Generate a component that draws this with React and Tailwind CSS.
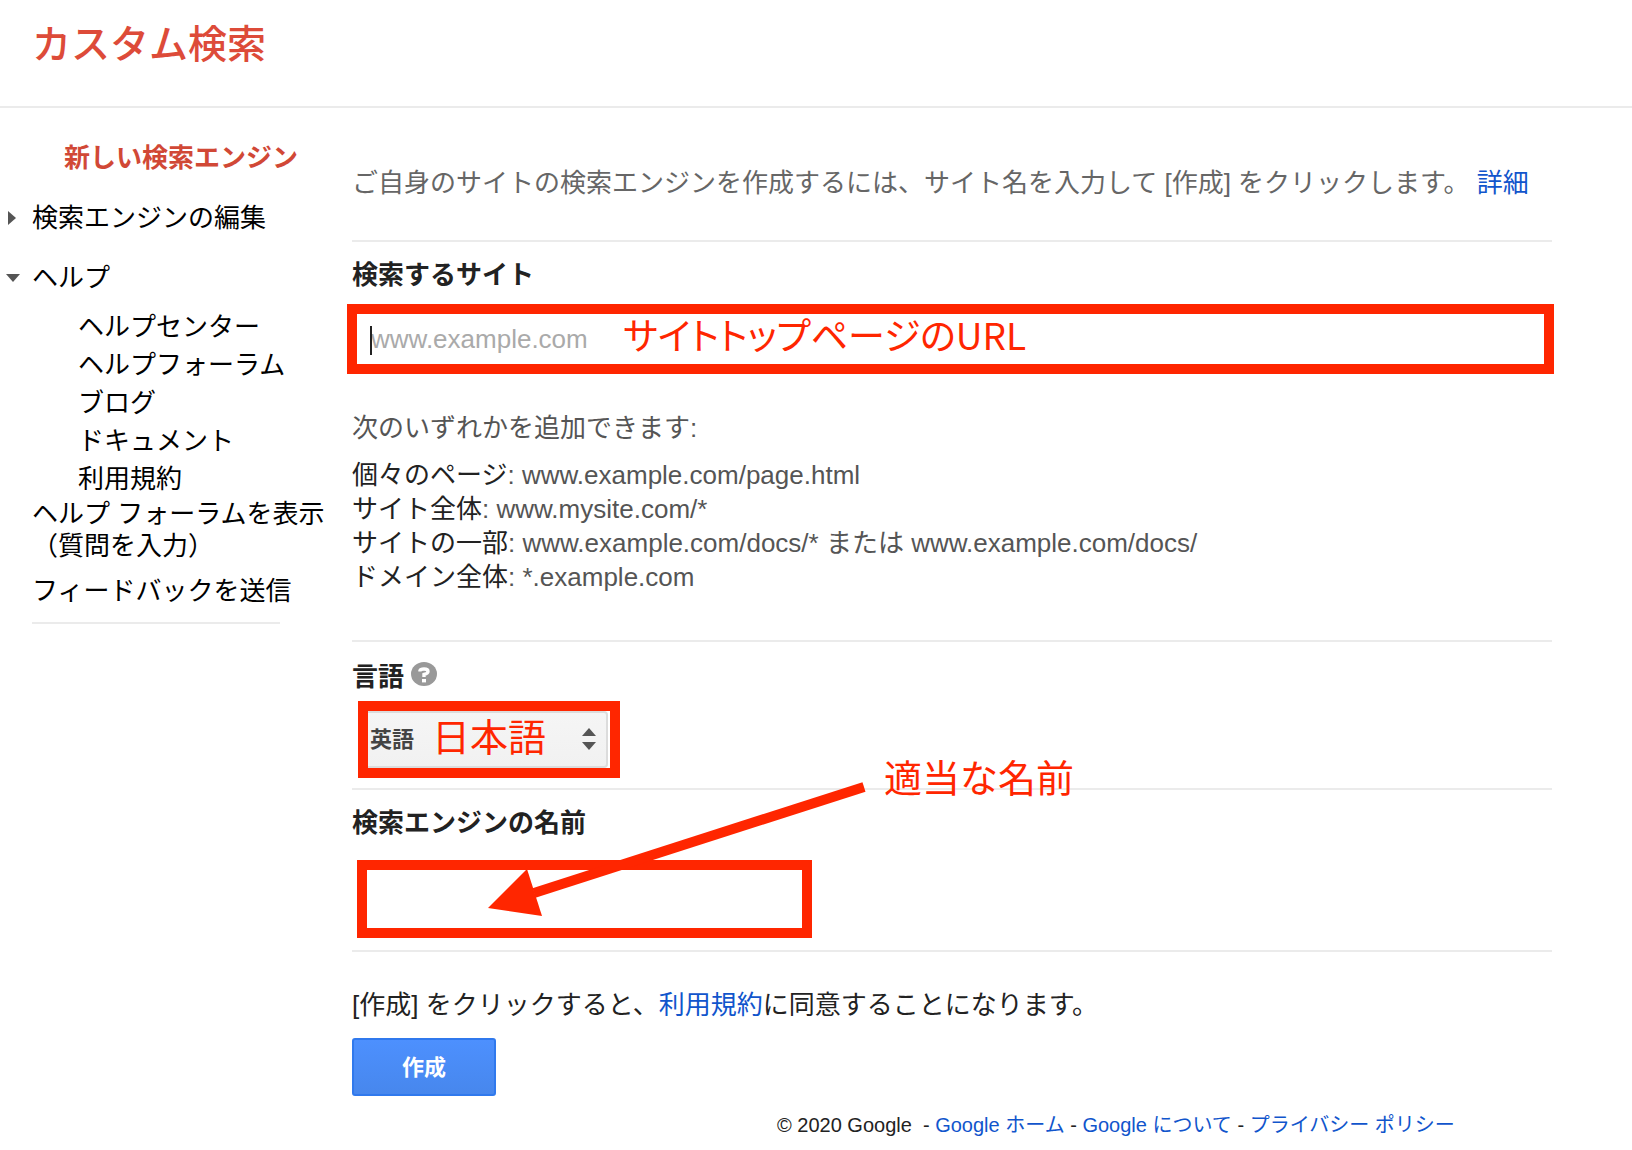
// src/pages/NewEngine.jsx
import { useState } from "react";

const helpLinks = ["ヘルプセンター", "ヘルプフォーラム", "ブログ", "ドキュメント", "利用規約"];

const examples = [
  { label: "個々のページ", value: "www.example.com/page.html" },
  { label: "サイト全体", value: "www.mysite.com/*" },
  { label: "サイトの一部", value: "www.example.com/docs/* または www.example.com/docs/" },
  { label: "ドメイン全体", value: "*.example.com" },
];

function Note({ className, children }) {
  return (
    <span
      className={`absolute whitespace-nowrap pointer-events-none font-['Noto_Sans_CJK_JP',sans-serif] leading-[48px] text-[#ff2600] ${className}`}
    >
      {children}
    </span>
  );
}

function Sidebar() {
  return (
    <nav className="w-[352px] shrink-0 pt-5 text-black">
      <a href="#new" className="flex h-[60px] items-center pl-16 font-bold text-[#d14836]">
        新しい検索エンジン
      </a>
      <a href="#edit" className="flex h-[60px] items-center">
        <svg className="ml-2 mr-4 h-[14px] w-2" viewBox="0 0 8 14" fill="#555">
          <path d="M0 0L8 7L0 14Z" />
        </svg>
        検索エンジンの編集
      </a>
      <a href="#help" className="flex h-[60px] items-center">
        <svg className="ml-[6px] mr-3 h-2 w-[14px]" viewBox="0 0 14 8" fill="#555">
          <path d="M0 0H14L7 8Z" />
        </svg>
        ヘルプ
      </a>
      <ul className="pl-[78px] leading-[38px]">
        {helpLinks.map((text) => (
          <li key={text}>
            <a href="#help">{text}</a>
          </li>
        ))}
      </ul>
      <div className="pl-8">
        <a href="#forum" className="block leading-[32px]">
          ヘルプ フォーラムを表示
          <br />
          （質問を入力）
        </a>
        <a href="#feedback" className="mt-[10px] block leading-[38px]">
          フィードバックを送信
        </a>
        <hr className="mt-3 w-[248px] border-t-2 border-[#ebebeb]" />
      </div>
    </nav>
  );
}

export default function App() {
  const [site, setSite] = useState("");
  const [name, setName] = useState("");

  return (
    <div className="min-h-screen bg-white font-['Liberation_Sans','Noto_Sans_CJK_JP',sans-serif] text-[26px] text-[#222]">
      {/* Header */}
      <header className="flex h-[108px] border-b-2 border-[#ebebeb] pl-8 pt-5">
        <h1 className="text-[39px] font-medium leading-[50px] text-[#dd4b39]">カスタム検索</h1>
      </header>

      <div className="flex">
        <Sidebar />

        <main className="min-w-0 flex-1">
          <form className="pr-20" onSubmit={(e) => e.preventDefault()}>
            <p className="whitespace-nowrap pb-[39px] pt-[57px] leading-[36px] text-[#666]">
              ご自身のサイトの検索エンジンを作成するには、サイト名を入力して [作成] をクリックします。{" "}
              <a href="#more" className="text-[#1155cc]">詳細</a>
            </p>

            {/* Sites to search */}
            <section className="border-t-2 border-[#ebebeb] pb-[46px] pt-[15px]">
              <label htmlFor="site" className="block font-bold leading-[36px]">検索するサイト</label>
              <div className="relative -ml-[5px] -mr-[2px] mt-[11px] border-[10px] border-[#ff2600]">
                <input
                  id="site"
                  type="text"
                  placeholder="www.example.com"
                  value={site}
                  onChange={(e) => setSite(e.target.value)}
                  className="block h-[50px] w-full bg-white pl-[14px] placeholder:text-[#aaa] focus:outline-none"
                />
                <span className="absolute left-[13px] top-3 h-[29px] w-[2px] bg-[#222]"></span>
                <Note className="-top-1 left-[266px] text-[37px] [font-feature-settings:'palt']">サイトトップページのURL</Note>
              </div>
              <p className="mt-[37px] leading-[34px] text-[#555]">次のいずれかを追加できます:</p>
              <ul className="mt-[13px] leading-[34px] text-[#555]">
                {examples.map((ex) => (
                  <li key={ex.label}>
                    <span className="text-[#222]">{ex.label}</span>: {ex.value}
                  </li>
                ))}
              </ul>
            </section>

            {/* Language */}
            <section className="border-t-2 border-[#ebebeb] pb-[10px] pt-[17px]">
              <div className="flex items-start gap-[7px]">
                <label htmlFor="lang" className="font-bold leading-[36px]">言語</label>
                <svg className="mt-[3px] h-6 w-[26px]" viewBox="0 0 26 24">
                  <ellipse cx="13" cy="12" rx="13" ry="12" fill="#999" />
                  <path d="M9 9.5V8.5Q9.5 7 13 7Q17 7 17 9.5Q17 11.5 13 12.5V15" fill="none" stroke="#fff" strokeWidth="3.4" />
                  <path d="M11 17h4v3.4h-4z" fill="#fff" />
                </svg>
              </div>
              <div className="relative ml-[6px] mt-[6px] h-[77px] w-[262px] border-[10px] border-[#ff2600]">
                <select
                  id="lang"
                  className="block h-full w-[240px] appearance-none rounded-r-sm border-2 border-l-0 border-[#dcdcdc] bg-linear-to-b from-[#f5f5f5] to-[#f1f1f1] pl-[2px] text-[22px] font-bold text-[#444]"
                >
                  <option>英語</option>
                  <option>日本語</option>
                </select>
                <svg className="pointer-events-none absolute left-[214px] top-[17px] h-[22px] w-[14px]" viewBox="0 0 14 22" fill="#555">
                  <path d="M0 8L7 0L14 8ZM0 14H14L7 22Z" />
                </svg>
                <Note className="left-[64px] top-0 text-[38px]">日本語</Note>
              </div>
            </section>

            {/* Engine name */}
            <section className="relative border-t-2 border-[#ebebeb] pb-3 pt-[15px]">
              <label htmlFor="name" className="block font-bold leading-[36px]">検索エンジンの名前</label>
              <div className="ml-[5px] mt-[19px] h-[78px] w-[455px] border-[10px] border-[#ff2600]">
                <input
                  id="name"
                  type="text"
                  value={name}
                  onChange={(e) => setName(e.target.value)}
                  className="block h-full w-full bg-white px-2 focus:outline-none"
                />
              </div>
              <svg className="pointer-events-none absolute -top-[10px] left-[132px] h-[140px] w-[384px]" viewBox="0 0 384 140">
                <path d="M50 113L380 7" stroke="#ff2600" strokeWidth="10" />
                <path d="M4 128L43 89L58 136Z" fill="#ff2600" />
              </svg>
              <Note className="-top-[38px] left-[532px] text-[38px]">適当な名前</Note>
            </section>

            {/* Terms and submit */}
            <section className="border-t-2 border-[#ebebeb] pt-[35px]">
              <p className="leading-[36px]">
                [作成] をクリックすると、<a href="#terms" className="text-[#1155cc]">利用規約</a>に同意することになります。
              </p>
              <button
                type="submit"
                className="mt-[15px] block h-[58px] w-36 rounded-[3px] border-2 border-[#3079ed] bg-linear-to-b from-[#4d90fe] to-[#4787ed] text-[22px] font-bold text-white"
              >
                作成
              </button>
            </section>
          </form>

          <footer className="mt-[14px] whitespace-pre pl-[425px] text-[20px] leading-[30px]">
            © 2020 Google{"  "}- <a href="#home" className="text-[#1155cc]">Google ホーム</a> -{" "}
            <a href="#about" className="text-[#1155cc]">Google について</a> -{" "}
            <a href="#privacy" className="text-[#1155cc]">プライバシー ポリシー</a>
          </footer>
        </main>
      </div>
    </div>
  );
}
